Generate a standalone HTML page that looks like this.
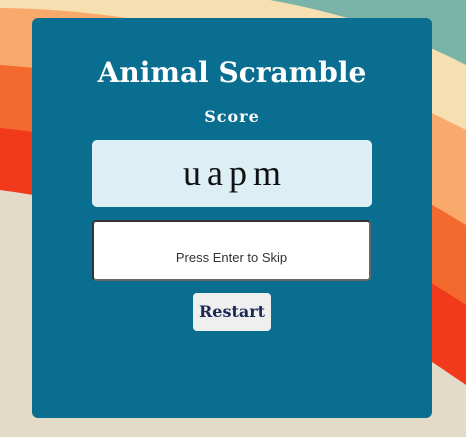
<!DOCTYPE html>
<html><head><style>
body{margin:0;width:466px;height:437px;overflow:hidden;position:relative;background:#e3dac8}
svg{position:absolute;left:0;top:0}
.card{position:absolute;left:32px;top:18px;width:400px;height:400px;background:#0a6e91;border-radius:6px}
.t{position:absolute;left:0;width:400px;text-align:center;color:#fff;font-family:"DejaVu Serif","Liberation Serif",serif;font-weight:bold}
.word{position:absolute;left:60px;top:122px;width:280px;height:67px;background:#ddeef5;border-radius:5px;text-align:center;font-family:"Liberation Serif",serif;font-size:36px;line-height:67px;color:#111;word-spacing:-3px}
.inp{position:absolute;left:60px;top:202px;width:275px;height:57px;background:#fff;border:2px solid #333;border-bottom-color:#666;border-right-color:#666;border-radius:4px;text-align:center;font-family:"Liberation Sans",sans-serif;font-size:13px;color:#333;line-height:72px}
.btn{position:absolute;left:161px;top:275px;width:78px;height:38px;background:#efefef;border-radius:4px;text-align:center;line-height:38px;font-family:"DejaVu Serif","Liberation Serif",serif;font-weight:bold;font-size:16px;color:#1b2a55}
</style></head><body>
<svg width="466" height="437">
<path d="M0 190 Q230 220 466 385 L466 0 L0 0Z" fill="#f1391c"/>
<path d="M0 128 Q230 150 466 305 L466 0 L0 0Z" fill="#f46a2e"/>
<path d="M0 65 Q230 80 466 225 L466 0 L0 0Z" fill="#f9a96b"/>
<path d="M0 8 Q230 10 466 130 L466 0 L0 0Z" fill="#f6dfb0"/>
<path d="M270 0 Q380 20 466 65 L466 0Z" fill="#7ab3a8"/>
</svg>
<div class="card">
<div class="t" style="top:38px;font-size:28px">Animal Scramble</div>
<div class="t" style="top:89px;font-size:16px;letter-spacing:1px">Score</div>
<div class="word">u a p m</div>
<div class="inp">Press Enter to Skip</div>
<div class="btn">Restart</div>
</div>
</body></html>
